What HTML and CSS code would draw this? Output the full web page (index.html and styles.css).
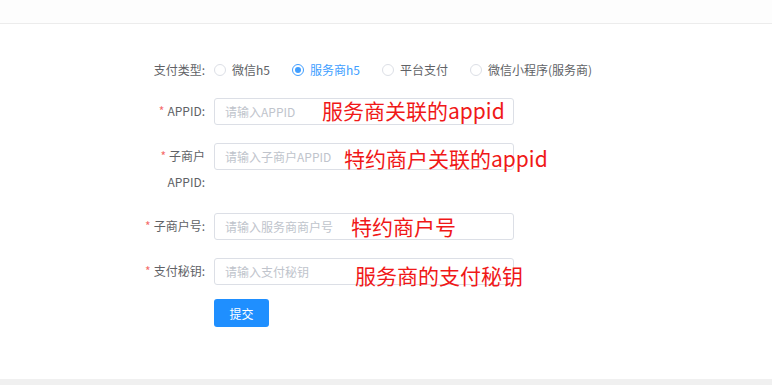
FILE: index.html
```
<!DOCTYPE html>
<html lang="zh-CN">

<head>
    <meta charset="UTF-8">
    <meta name="viewport" content="width=device-width, initial-scale=1.0">
    <title>支付配置</title>

    <link rel="stylesheet" href="styles.css">
</head>

<body>
    <div class="header"></div>

    <div class="main">
        <form class="pay-form">
            <div class="form-item radio-item">
                <label class="form-label">支付类型:</label>
                <div class="form-field radios">
                    <label class="radio"><span class="radio-dot"></span>微信h5</label>
                    <label class="radio checked"><span class="radio-dot"></span>服务商h5</label>
                    <label class="radio"><span class="radio-dot"></span>平台支付</label>
                    <label class="radio"><span class="radio-dot"></span>微信小程序(服务商)</label>
                </div>
            </div>

            <div class="form-item">
                <label class="form-label required">APPID:</label>
                <div class="form-field">
                    <input type="text" placeholder="请输入APPID">
                    <span class="note note-1">服务商关联的appid</span>
                </div>
            </div>

            <div class="form-item">
                <label class="form-label required">子商户APPID:</label>
                <div class="form-field">
                    <input type="text" placeholder="请输入子商户APPID">
                    <span class="note note-2">特约商户关联的appid</span>
                </div>
            </div>

            <div class="form-item">
                <label class="form-label required">子商户号:</label>
                <div class="form-field">
                    <input type="text" placeholder="请输入服务商商户号">
                    <span class="note note-3">特约商户号</span>
                </div>
            </div>

            <div class="form-item last">
                <label class="form-label required">支付秘钥:</label>
                <div class="form-field">
                    <input type="text" placeholder="请输入支付秘钥">
                    <span class="note note-4">服务商的支付秘钥</span>
                </div>
            </div>

            <div class="form-item">
                <div class="form-label"></div>
                <div class="form-field">
                    <button type="button">提交</button>
                </div>
            </div>
        </form>
    </div>

    <div class="footer"></div>
</body>

</html>
```

FILE: styles.css
```
body {
    margin: 0;
    background: #fff;
    font-family: "Noto Sans CJK SC", "Noto Sans", sans-serif;
    font-size: 12px;
    color: #606266;
}

.header {
    height: 23px;
    background: #fdfdfd;
    border-bottom: 1px solid #ececec;
}

.main {
    height: 355px;
    box-sizing: border-box;
    padding-top: 32px;
}

.footer {
    height: 6px;
    background: #f0f0f0;
}

.pay-form {
    padding-left: 142px;
}

.form-item {
    display: flex;
    align-items: flex-start;
    margin-bottom: 18px;
}

.form-item.last {
    margin-bottom: 14px;
}

.radio-item {
    margin-bottom: 15px;
}

.form-label {
    width: 72px;
    flex-shrink: 0;
    box-sizing: border-box;
    padding-right: 9px;
    text-align: right;
    line-height: 26px;
    color: #606266;
}

.radio-item .form-label {
    line-height: 27px;
}

.form-label.required::before {
    content: "*";
    color: #f56c6c;
    margin-right: 3px;
}

.form-field {
    position: relative;
}

.radios {
    display: flex;
    align-items: center;
    height: 27px;
}

.radio {
    display: flex;
    align-items: center;
    margin-right: 22px;
    color: #606266;
}

.radio.checked {
    color: #409eff;
}

.radio-dot {
    width: 10px;
    height: 10px;
    border: 1px solid #dcdfe6;
    border-radius: 50%;
    margin-right: 6px;
    position: relative;
}

.radio.checked .radio-dot {
    border-color: #409eff;
}

.radio.checked .radio-dot::after {
    content: "";
    position: absolute;
    left: 2px;
    top: 2px;
    width: 6px;
    height: 6px;
    border-radius: 50%;
    background: #409eff;
}

input[type=text] {
    width: 300px;
    height: 27px;
    box-sizing: border-box;
    padding: 0 10px;
    border: 1px solid #dcdfe6;
    border-radius: 3px;
    font-family: inherit;
    font-size: 12px;
    color: #606266;
    display: block;
}

input::placeholder {
    color: #c0c4cc;
}

button {
    width: 55px;
    height: 28px;
    border: none;
    border-radius: 3px;
    background: #1f8fff;
    color: #fff;
    font-family: inherit;
    font-size: 12px;
    cursor: pointer;
}

.note {
    position: absolute;
    white-space: nowrap;
    font-size: 21px;
    line-height: 24px;
    color: #f01818;
}

.note-1 {
    left: 108px;
    top: 0;
}

.note-2 {
    left: 130px;
    top: 3px;
}

.note-3 {
    left: 137px;
    top: 1px;
}

.note-4 {
    left: 141px;
    top: 5px;
}
```
